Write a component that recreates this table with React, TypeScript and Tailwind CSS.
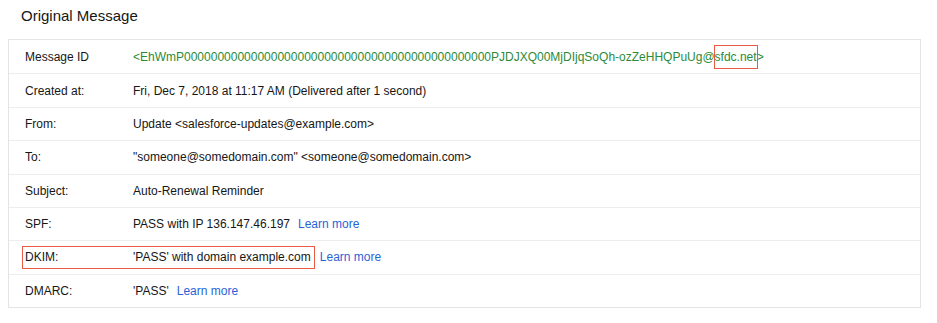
import {ReactNode} from 'react'

type Row = {
  label: string
  value: ReactNode
  link?: boolean
  boxed?: boolean
}

const zeros = '0'.repeat(46)

const rows: Row[] = [
  {
    label: 'Message ID',
    value: (
      <span className="text-[#2c8a38]">
        {`<EhWmP${zeros}PJDJXQ00MjDIjqSoQh-ozZeHHQPuUg@`}
        <span className="-mx-px border border-[#ea5a45] px-0 py-[4px]">sfdc.net</span>
        {'>'}
      </span>
    ),
  },
  {label: 'Created at:', value: 'Fri, Dec 7, 2018 at 11:17 AM (Delivered after 1 second)'},
  {label: 'From:', value: 'Update <salesforce-updates@example.com>'},
  {label: 'To:', value: '"someone@somedomain.com" <someone@somedomain.com>'},
  {label: 'Subject:', value: 'Auto-Renewal Reminder'},
  {label: 'SPF:', value: 'PASS with IP 136.147.46.197', link: true},
  {label: 'DKIM:', value: "'PASS' with domain example.com", link: true, boxed: true},
  {label: 'DMARC:', value: "'PASS'", link: true},
]

function LearnMore({className}: {className: string}) {
  return <a href="#" className={'text-[#2a63d8] ' + className}>Learn more</a>
}

// 1 行分（ラベルと値）
function MessageRow({row, first}: {row: Row; first: boolean}) {
  const cells = (
    <>
      <div className="w-[108px] shrink-0">{row.label}</div>
      <div>{row.value}</div>
    </>
  )
  return (
    <div className={'flex h-[33.375px] items-center pl-[16px] ' + (first ? '' : 'border-t border-[#ededed]')}>
      {row.boxed ? (
        <>
          <div className="-ml-[3px] flex h-[23px] items-center border border-[#ea5a45] pl-[2px] pr-[3px]">
            {cells}
          </div>
          <LearnMore className="ml-[5px]"/>
        </>
      ) : (
        <>
          {cells}
          {row.link && <LearnMore className="ml-[8px]"/>}
        </>
      )}
    </div>
  )
}

export default function App() {
  return (
    <div className="min-h-[323px] bg-white pt-[6px] font-['Liberation_Sans',Arial,sans-serif] text-[12px] text-[#161616]">
      <h1 className="pl-[21px] text-[15px] leading-[20px] text-[#161616]">Original Message</h1>
      <div className="ml-[8px] mt-[13px] w-[913px] border border-[#e4e4e4] bg-white">
        {rows.map((row, i) => (
          <MessageRow key={row.label} row={row} first={i === 0}/>
        ))}
      </div>
    </div>
  )
}
